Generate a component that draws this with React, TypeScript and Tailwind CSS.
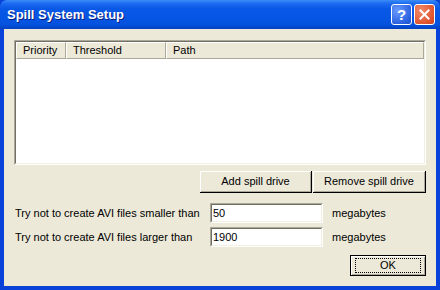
import React from "react";

const font = { fontFamily: '"Liberation Sans", Arial, sans-serif' };

function ClassicButton({
  label,
  className = "",
  isDefault = false,
}: {
  label: string;
  className?: string;
  isDefault?: boolean;
}) {
  return (
    <div
      className={`box-border bg-[#ECE9D8] ${
        isDefault ? "border border-black" : "border-r border-b border-black"
      } ${className}`}
    >
      <div className="box-border flex h-full w-full border-t border-l border-white">
        <div className="box-border flex h-full w-full items-center justify-center border-r border-b border-[#ACA899] text-[11px] text-black">
          {isDefault ? (
            <div className="flex h-[15px] w-[66px] items-center justify-center border border-dotted border-black leading-none">
              {label}
            </div>
          ) : (
            label
          )}
        </div>
      </div>
    </div>
  );
}

function HeaderCell({ label, className = "" }: { label: string; className?: string }) {
  return (
    <div
      className={`box-border flex h-[17px] items-center border-t border-l border-white border-r border-b border-r-[#ACA899] border-b-[#ACA899] bg-[#ECE9D8] pl-[6px] text-[11px] text-black ${className}`}
    >
      {label}
    </div>
  );
}

function TextInput({ value }: { value: string }) {
  return (
    <div className="box-border h-[20px] w-[113px] border-t border-l border-[#ACA899] border-r border-b border-r-white border-b-white">
      <div className="box-border flex h-full w-full items-center border-t border-l border-[#716F64] border-r border-b border-r-[#F1EFE2] border-b-[#F1EFE2] bg-white pl-[1px] text-[11px] text-black">
        {value}
      </div>
    </div>
  );
}

export default function App() {
  return (
    <div className="flex h-[290px] w-[440px] flex-col overflow-hidden bg-[#0842D9]" style={font}>
      {/* Title bar */}
      <div className="flex h-[29px] shrink-0 items-center justify-between rounded-t-[7px] bg-[linear-gradient(to_bottom,#3C8CF5_0%,#1C6BF0_12%,#0A58E6_30%,#0655E4_60%,#0552DE_85%,#0541C0_100%)] pl-[7px] pr-[5px]">
        <span className="text-[13px] font-bold text-white [text-shadow:1px_1px_0_#0A1E80]">
          Spill System Setup
        </span>
        <div className="flex gap-[2px]">
          <div className="flex h-[21px] w-[21px] items-center justify-center rounded-[3px] border border-white bg-[radial-gradient(circle_at_30%_30%,#6B9BFF,#2B62E0_70%,#1E4FD0)] text-[15px] font-bold leading-none text-white">
            ?
          </div>
          <div className="flex h-[21px] w-[21px] items-center justify-center rounded-[3px] border border-white bg-[radial-gradient(circle_at_30%_30%,#F08A6A,#E0552E_70%,#C8401E)]">
            <svg width="11" height="11" viewBox="0 0 11 11">
              <path d="M1.5 1.5 L9.5 9.5 M9.5 1.5 L1.5 9.5" stroke="white" strokeWidth="2" strokeLinecap="square" />
            </svg>
          </div>
        </div>
      </div>

      {/* Client area */}
      <div className="mx-[4px] mb-[4px] flex flex-1 flex-col bg-[#ECE9D8] pl-[10px] pt-[11px]">
        {/* List view */}
        <div className="box-border h-[125px] w-[412px] border-t border-l border-[#ACA899] border-r border-b border-r-white border-b-white">
          <div className="box-border flex h-full w-full flex-col border-t border-l border-[#716F64] border-r border-b border-r-[#F1EFE2] border-b-[#F1EFE2] bg-white">
            <div className="flex">
              <HeaderCell label="Priority" className="w-[50px]" />
              <HeaderCell label="Threshold" className="w-[100px]" />
              <HeaderCell label="Path" className="flex-1" />
            </div>
          </div>
        </div>

        {/* Spill drive buttons */}
        <div className="mt-[6px] flex w-[412px] justify-end gap-[1px]">
          <ClassicButton label="Add spill drive" className="h-[22px] w-[112px]" />
          <ClassicButton label="Remove spill drive" className="h-[22px] w-[113px]" />
        </div>

        {/* Size limits */}
        <div className="mt-[10px] flex flex-col gap-[4px] text-[11px] text-black">
          <div className="flex items-center">
            <span className="w-[196px] pl-[1px]">Try not to create AVI files smaller than</span>
            <TextInput value="50" />
            <span className="ml-[9px]">megabytes</span>
          </div>
          <div className="flex items-center">
            <span className="w-[196px] pl-[1px]">Try not to create AVI files larger than</span>
            <TextInput value="1900" />
            <span className="ml-[9px]">megabytes</span>
          </div>
        </div>

        <div className="mt-[8px] flex w-[412px] justify-end">
          <ClassicButton label="OK" isDefault className="h-[21px] w-[76px]" />
        </div>
      </div>
    </div>
  );
}
